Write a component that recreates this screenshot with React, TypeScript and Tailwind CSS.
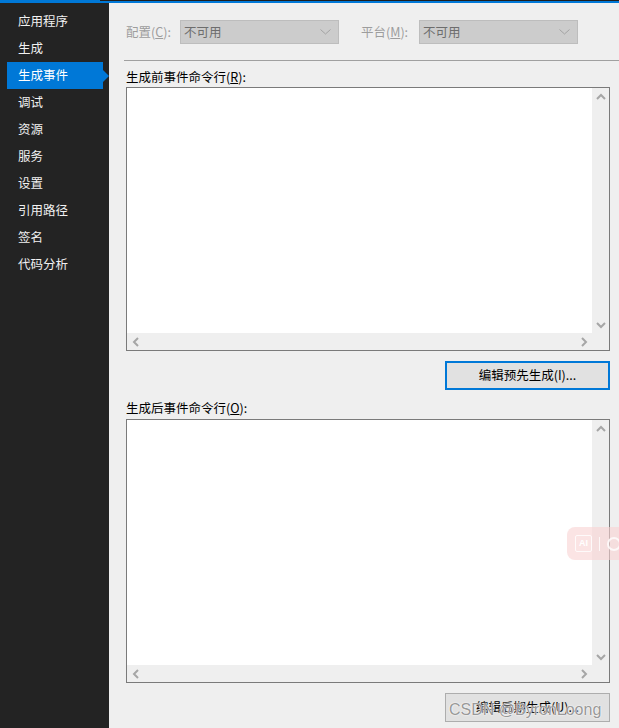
import React from "react";

const FONT = { fontFamily: '"Noto Sans CJK SC", "Microsoft YaHei", sans-serif' };

const items = ["应用程序", "生成", "生成事件", "调试", "资源", "服务", "设置", "引用路径", "签名", "代码分析"];

function Chevron({ dir }: { dir: "up" | "down" | "left" | "right" }) {
  const paths: Record<string, string> = {
    up: "M1 6 L5 2 L9 6",
    down: "M1 2 L5 6 L9 2",
    left: "M6 1 L2 5 L6 9",
    right: "M2 1 L6 5 L2 9",
  };
  const vertical = dir === "up" || dir === "down";
  return (
    <svg width={vertical ? 10 : 8} height={vertical ? 8 : 10} viewBox={vertical ? "0 0 10 8" : "0 0 8 10"}>
      <path d={paths[dir]} fill="none" stroke="#a6a6a6" strokeWidth="2" />
    </svg>
  );
}

function Select() {
  return (
    <div className="w-[159px] h-[24px] bg-[#cccccc] border border-[#bdbdbd] pl-[3px] pr-[7px] flex items-center justify-between text-[#6d6d6d] text-[12.5px]">
      <span>不可用</span>
      <svg width="11" height="6" viewBox="0 0 11 6">
        <path d="M0.5 0.5 L5.5 5 L10.5 0.5" fill="none" stroke="#a3a3a3" strokeWidth="1" />
      </svg>
    </div>
  );
}

function TextBox() {
  return (
    <div className="ml-[2px] w-[484px] h-[264px] border border-[#7a7a7a] bg-white flex flex-col">
      <div className="flex-1 flex">
        <div className="flex-1 bg-white" />
        <div className="w-[17px] bg-[#efefef] flex flex-col justify-between items-center">
          <div className="h-[17px] flex items-center justify-center">
            <Chevron dir="up" />
          </div>
          <div className="h-[17px] flex items-center justify-center">
            <Chevron dir="down" />
          </div>
        </div>
      </div>
      <div className="h-[17px] flex">
        <div className="flex-1 bg-[#efefef] flex justify-between items-center">
          <div className="w-[17px] flex justify-center">
            <Chevron dir="left" />
          </div>
          <div className="w-[17px] flex justify-center">
            <Chevron dir="right" />
          </div>
        </div>
        <div className="w-[17px] bg-[#efefef]" />
      </div>
    </div>
  );
}

export default function App() {
  return (
    <div className="relative w-[619px] h-[728px] overflow-hidden flex flex-col bg-[#efefef]" style={FONT}>
      <div className="h-[3px] flex">
        <div className="w-[100px] bg-[#0078d7]" />
        <div className="flex-1 border-t border-[#1e1e1e] bg-[#0078d7]" />
      </div>
      <div className="flex-1 flex">
        <div className="w-[109px] bg-[#232323] pt-[5px] flex flex-col text-[12.5px] text-[#f1f1f1]">
          {items.map((it, i) =>
            i === 2 ? (
              <div key={it} className="h-[27px] flex items-center">
                <div className="ml-[7px] w-[96px] h-full bg-[#0078d7] pl-[11px] flex items-center text-white">{it}</div>
                <svg width="6" height="12" viewBox="0 0 6 12">
                  <path d="M0 0 L6 6 L0 12 Z" fill="#0078d7" />
                </svg>
              </div>
            ) : (
              <div key={it} className="h-[27px] flex items-center pl-[18px]">
                {it}
              </div>
            )
          )}
        </div>
        <div className="flex-1 flex flex-col pl-[15px] text-[12.5px] text-black">
          <div className="mt-[17px] h-[24px] flex items-center pl-[2px]">
            <div className="w-[54px] text-[#9d9d9d]">
              配置(<span className="underline">C</span>):
            </div>
            <Select />
            <div className="ml-[22px] w-[58px] text-[#9d9d9d]">
              平台(<span className="underline">M</span>):
            </div>
            <Select />
          </div>
          <div className="mt-[16px] h-px bg-[#a0a0a0]" />
          <div className="mt-[8px] h-[16px] leading-[16px] pl-[2px]">
            生成前事件命令行(<span className="underline">R</span>):
          </div>
          <div className="mt-[2px]">
            <TextBox />
          </div>
          <div className="ml-[2px] w-[484px] flex justify-end mt-[10px]">
            <div className="w-[165px] h-[29px] border-2 border-[#0078d7] bg-[#e1e1e1] flex items-center justify-center">
              编辑预先生成(I)...
            </div>
          </div>
          <div className="mt-[10px] h-[16px] leading-[16px] pl-[2px]">
            生成后事件命令行(<span className="underline">O</span>):
          </div>
          <div className="mt-[3px]">
            <TextBox />
          </div>
          <div className="ml-[2px] w-[484px] flex justify-end mt-[10px]">
            <div className="w-[165px] h-[29px] border border-[#adadad] bg-[#e1e1e1] flex items-center justify-center">
              编辑后期生成(U)...
            </div>
          </div>
        </div>
      </div>

      {/* floating AI widget */}
      <div className="absolute left-[567px] top-[527px] w-[70px] h-[33px] rounded-lg bg-[#f9d2d2]/60 flex items-center pl-[8px] gap-[7px]">
        <div className="w-[17px] h-[17px] border border-white/80 rounded-[2px] flex items-center justify-center text-[9px] font-bold text-white" style={{ fontFamily: '"Liberation Sans", sans-serif' }}>
          AI
        </div>
        <div className="w-px h-[14px] bg-white/80" />
        <div className="w-[14px] h-[14px] rounded-full border-2 border-white/80" />
      </div>

      {/* watermark */}
      <div
        className="absolute left-[449px] top-[698px] text-[16px] text-[#7d7d7d]/80 whitespace-nowrap"
        style={{ fontFamily: '"Liberation Sans", sans-serif', textShadow: "0 0 2px #ffffff, 0 0 1px #ffffff" }}
      >
        CSDN @ByronLoong
      </div>
    </div>
  );
}
